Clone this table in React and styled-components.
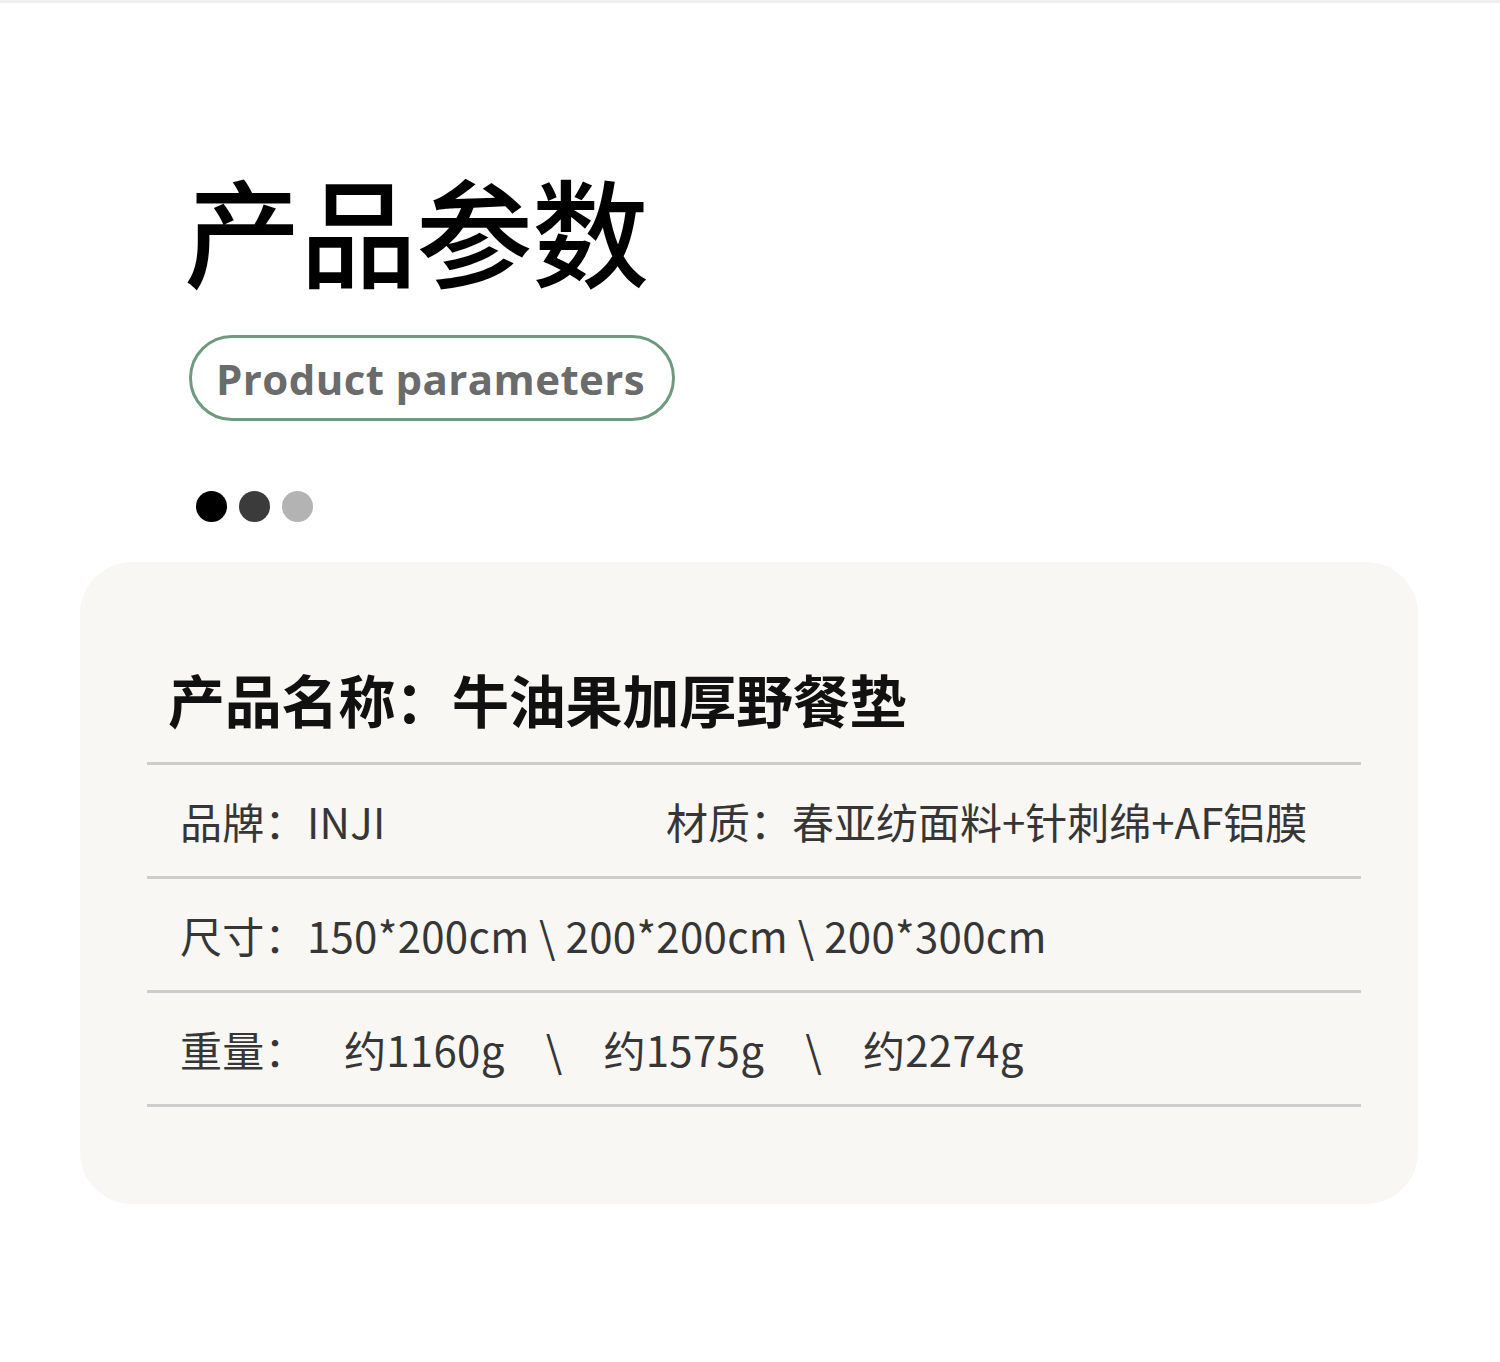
import React from "react";
import styled, { createGlobalStyle } from "styled-components";

const GlobalStyle = createGlobalStyle`
  html, body {
    margin: 0;
    padding: 0;
    background: #ffffff;
  }
  body {
    font-family: "Noto Sans CJK SC", "Noto Sans", sans-serif;
    color: #333333;
  }
`;

const StyledPage = styled.div`
  width: 1500px;
  height: 1362px;
  box-sizing: border-box;
  border-top: 3px solid #efefef;
  padding-top: 150px;
`;

const StyledHeader = styled.div`
  display: flex;
  flex-direction: column;
  align-items: flex-start;
  padding-left: 184px;
`;

const StyledTitle = styled.h1`
  margin: 0;
  font-size: 117px;
  line-height: 150px;
  font-weight: 500;
  color: #000000;
  letter-spacing: -1px;
`;

const StyledPill = styled.div`
  margin-top: 32px;
  margin-left: 5px;
  height: 86px;
  box-sizing: border-box;
  padding: 0 27px 0 24px;
  display: flex;
  align-items: center;
  border: 3px solid #6e9b80;
  border-radius: 43px;
  font-family: "Open Sans", "Noto Sans", sans-serif;
  font-weight: 700;
  font-size: 42px;
  letter-spacing: 0.4px;
  color: #6b6b6b;
`;

const StyledDots = styled.div`
  display: flex;
  gap: 12px;
  margin-top: 70px;
  margin-left: 12px;
`;

const StyledDot = styled.span`
  width: 31px;
  height: 31px;
  border-radius: 50%;
  background: ${(p) => p.color};
`;

const StyledCard = styled.div`
  margin: 40px 0 0 80px;
  width: 1338px;
  height: 642px;
  box-sizing: border-box;
  border-radius: 52px;
  background: #f8f7f4;
  padding: 96px 57px 0 67px;
`;

const StyledName = styled.div`
  padding-left: 21px;
  font-size: 57px;
  font-weight: 700;
  color: #111111;
  line-height: 80px;
  letter-spacing: -0.2px;
`;

const StyledRule = styled.div`
  height: 3px;
  background: #cdcdcd;
  margin-top: ${(p) => p.top || 0}px;
`;

const StyledRow = styled.div`
  display: flex;
  align-items: center;
  height: 111px;
  padding-left: 33px;
  font-size: 42px;
  color: #363636;
  white-space: nowrap;
  letter-spacing: 0.3px;
`;

const StyledCell = styled.span`
  width: ${(p) => (p.width ? `${p.width}px` : "auto")};
  letter-spacing: ${(p) => (p.tight ? "0" : "inherit")};
`;

const StyledWeights = styled.span`
  display: flex;
  align-items: center;
  gap: 37px;
  margin-left: 37px;
`;

const StyledSlash = styled.span`
  padding: 0 4px;
`;

const App = () => {
  return (
    <StyledPage>
      <GlobalStyle />
      <StyledHeader>
        <StyledTitle>产品参数</StyledTitle>
        <StyledPill>Product parameters</StyledPill>
        <StyledDots>
          <StyledDot color="#000000" />
          <StyledDot color="#3b3b3b" />
          <StyledDot color="#b3b3b3" />
        </StyledDots>
      </StyledHeader>

      <StyledCard>
        <StyledName>产品名称：牛油果加厚野餐垫</StyledName>
        <StyledRule top={24} />
        <StyledRow>
          <StyledCell width={486}>品牌：INJI</StyledCell>
          <StyledCell tight>材质：春亚纺面料+针刺绵+AF铝膜</StyledCell>
        </StyledRow>
        <StyledRule />
        <StyledRow>
          <StyledCell>尺寸：150*200cm \ 200*200cm \ 200*300cm</StyledCell>
        </StyledRow>
        <StyledRule />
        <StyledRow>
          <StyledCell>重量：</StyledCell>
          <StyledWeights>
            <span>约1160g</span>
            <StyledSlash>\</StyledSlash>
            <span>约1575g</span>
            <StyledSlash>\</StyledSlash>
            <span>约2274g</span>
          </StyledWeights>
        </StyledRow>
        <StyledRule />
      </StyledCard>
    </StyledPage>
  );
};

export default App;
